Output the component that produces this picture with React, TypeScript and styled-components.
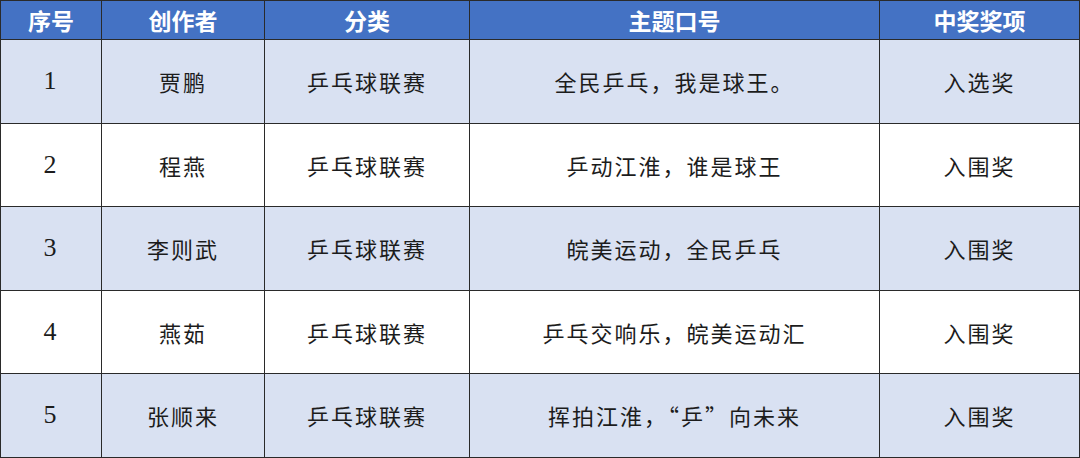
import React from 'react';
import styled, { createGlobalStyle } from 'styled-components';

const GlobalStyle = createGlobalStyle`
  html, body {
    margin: 0;
    padding: 0;
    background: #ffffff;
  }
`;

const Table = styled.table`
  border-collapse: collapse;
  width: 1079px;
  table-layout: fixed;
  font-family: "Noto Sans CJK SC", "Noto Sans", sans-serif;
`;

const HeadCell = styled.th`
  height: 38px;
  padding: 0;
  background: #4472c4;
  color: #ffffff;
  border: 1px solid #2a2a2a;
  font-weight: 700;
  font-size: 23px;
  line-height: 1;
  text-align: center;
  vertical-align: middle;
`;

const Row = styled.tr<{ $striped: boolean }>`
  height: 83.5px;
  background: ${(p) => (p.$striped ? '#d9e1f2' : '#ffffff')};
`;

const Cell = styled.td<{ $num?: boolean }>`
  padding: 0;
  border: 1px solid #2a2a2a;
  color: #1c1c1c;
  font-family: ${(p) =>
    p.$num ? '"Liberation Serif", serif' : '"Noto Sans CJK SC", sans-serif'};
  font-size: ${(p) => (p.$num ? '26px' : '22px')};
  font-weight: 400;
  text-align: center;
  vertical-align: middle;
  letter-spacing: 2px;
`;

const columns = [
  { title: '序号', width: 101 },
  { title: '创作者', width: 163 },
  { title: '分类', width: 205 },
  { title: '主题口号', width: 410 },
  { title: '中奖奖项', width: 200 },
];

const rows = [
  ['1', '贾鹏', '乒乓球联赛', '全民乒乓，我是球王。', '入选奖'],
  ['2', '程燕', '乒乓球联赛', '乒动江淮，谁是球王', '入围奖'],
  ['3', '李则武', '乒乓球联赛', '皖美运动，全民乒乓', '入围奖'],
  ['4', '燕茹', '乒乓球联赛', '乒乓交响乐，皖美运动汇', '入围奖'],
  ['5', '张顺来', '乒乓球联赛', '挥拍江淮，“乒”向未来', '入围奖'],
];

const App = () => (
  <>
    <GlobalStyle />
    <Table>
      <colgroup>
        {columns.map((col) => (
          <col key={col.title} style={{ width: col.width }} />
        ))}
      </colgroup>
      <thead>
        <tr>
          {columns.map((col) => (
            <HeadCell key={col.title}>{col.title}</HeadCell>
          ))}
        </tr>
      </thead>
      <tbody>
        {rows.map((row, index) => (
          <Row key={row[0]} $striped={index % 2 === 0}>
            {row.map((value, i) => (
              <Cell key={i} $num={i === 0}>
                {value}
              </Cell>
            ))}
          </Row>
        ))}
      </tbody>
    </Table>
  </>
);

export default App;
